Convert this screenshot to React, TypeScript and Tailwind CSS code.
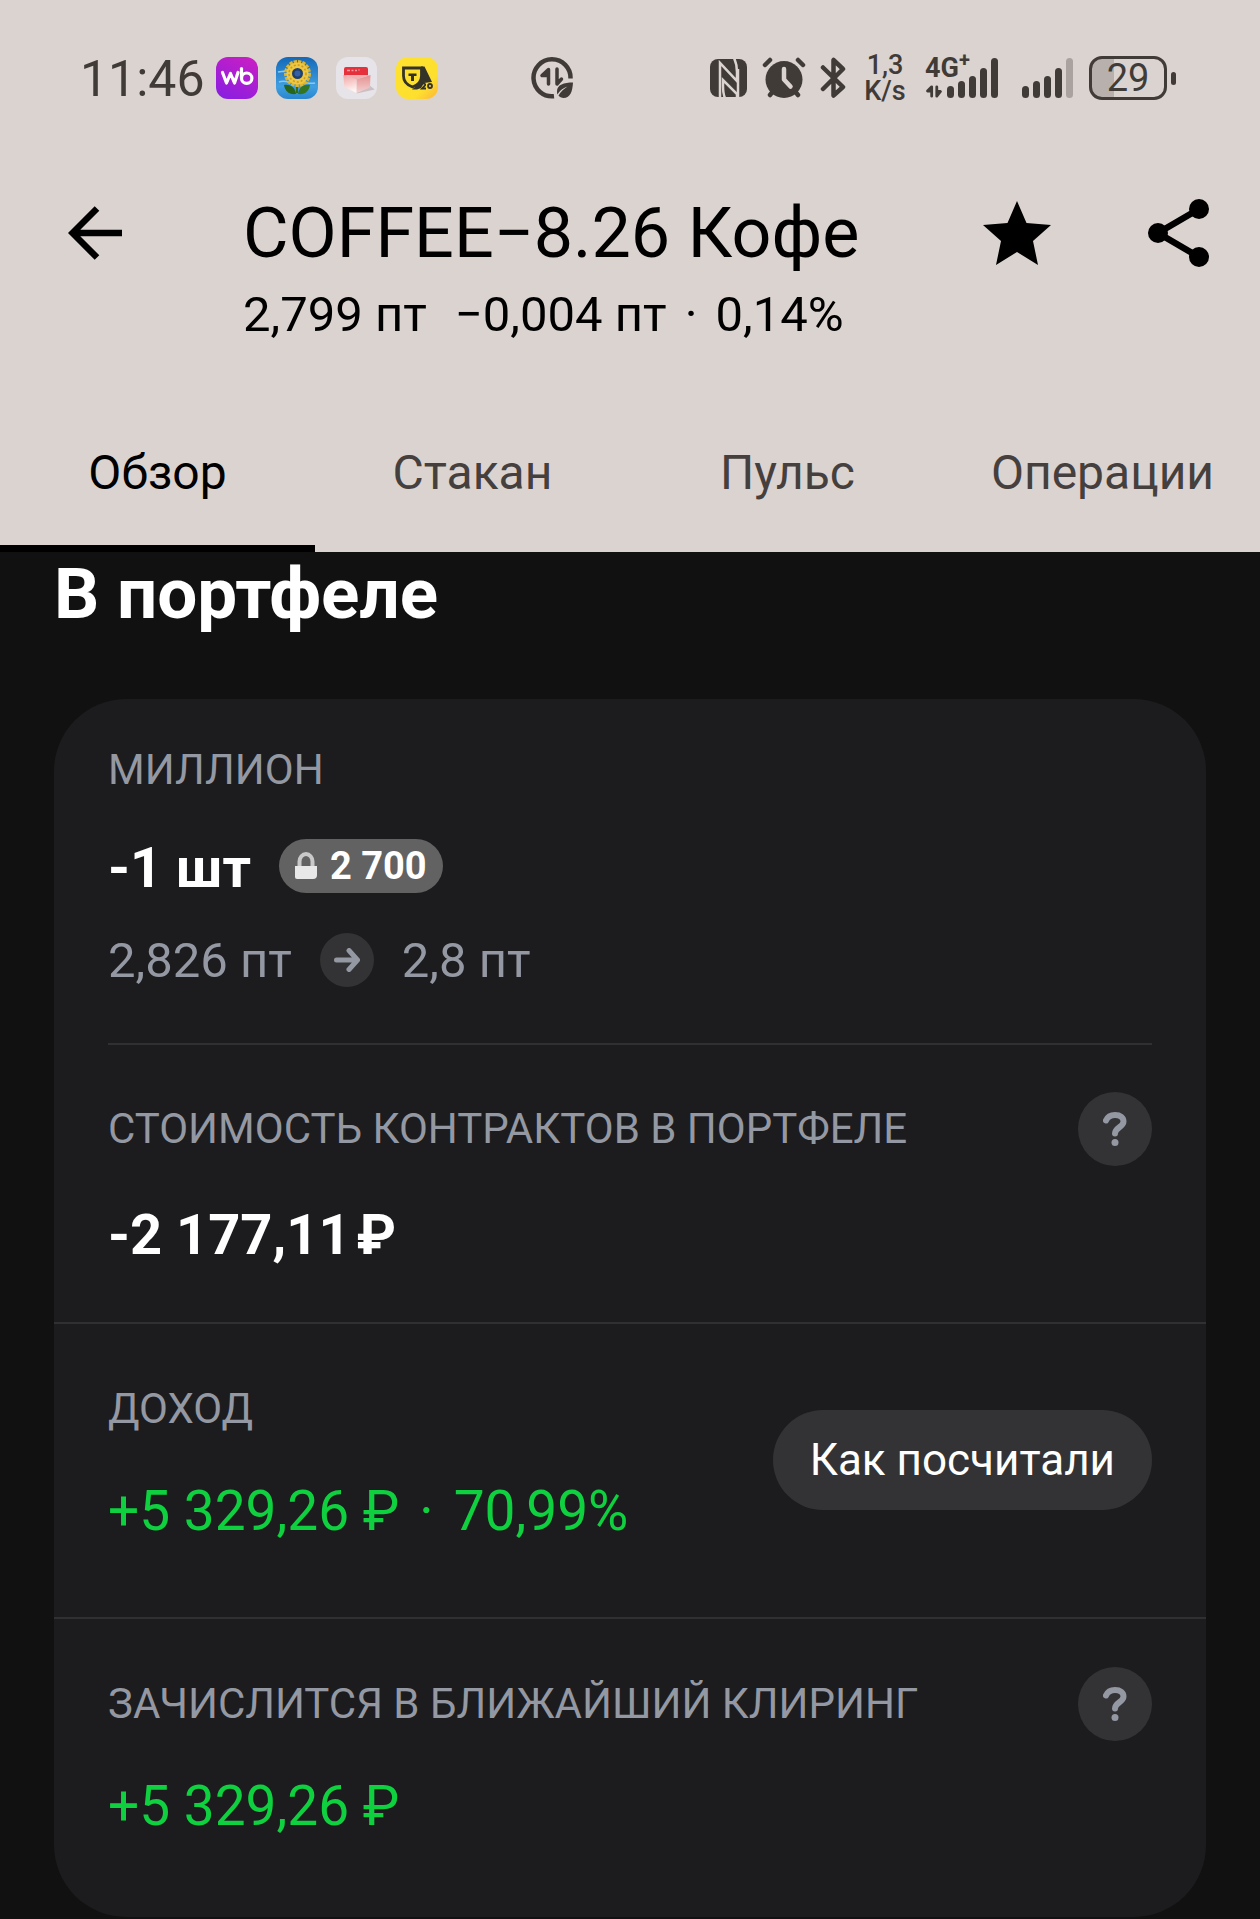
const tabs = ["Обзор", "Стакан", "Пульс", "Операции"]

const WbIcon = () => (
  <svg viewBox="0 0 42 42" className="w-[42px] h-[42px]">
    <defs>
      <linearGradient id="wb" x1="0.8" y1="0" x2="0.3" y2="1">
        <stop offset="0" stopColor="#c81fc4" />
        <stop offset="1" stopColor="#8c1ee0" />
      </linearGradient>
    </defs>
    <rect width="42" height="42" rx="12" fill="url(#wb)" />
    <g fill="none" stroke="#fff" strokeWidth="3.2" strokeLinecap="round" strokeLinejoin="round">
      <path d="M6.500 15.500 10.500 26l4-9.500 4 9.500 3.500-10.500" />
      <path d="M25.500 11.500V21" />
      <circle cx="30.700" cy="21.200" r="5.200" />
    </g>
  </svg>
)

const SunflowerIcon = () => (
  <svg viewBox="0 0 42 42" className="w-[42px] h-[42px]">
    <defs>
      <linearGradient id="sky" x1="0" y1="0" x2="0" y2="1">
        <stop offset="0" stopColor="#1468b8" />
        <stop offset="0.7" stopColor="#3f9fe0" />
        <stop offset="1" stopColor="#2a86cf" />
      </linearGradient>
    </defs>
    <rect width="42" height="42" rx="12" fill="url(#sky)" />
    <path d="M3 25c5-2 9 1 14-1M26 27c5-2 8 0 13-1M2 15c3-1 5 0 7-1" stroke="#8cc8ef" strokeWidth="1.5" fill="none" />
    <path d="M21 26v10" stroke="#2f6d1d" strokeWidth="2" />
    <path d="M20 37c-7 1-11-3-12-9 6-1 11 2 12 9Z" fill="#27651b" />
    <path d="M22 37c7 1 11-3 12-9-6-1-11 2-12 9Z" fill="#347523" />
    <circle cx="21.500" cy="16.500" r="11" fill="none" stroke="#e0b42c" strokeWidth="5" strokeDasharray="3 1" />
    <circle cx="21.500" cy="16.500" r="11" fill="#edc840" />
    <circle cx="21.500" cy="16.500" r="8.500" fill="none" stroke="#c9982a" strokeWidth="1.500" strokeDasharray="2 2" />
    <circle cx="21.500" cy="16.500" r="5.500" fill="#1f3f70" />
    <circle cx="21.500" cy="16.500" r="3" fill="#3461a5" />
  </svg>
)

const BoxIcon = () => (
  <svg viewBox="0 0 42 42" className="w-[42px] h-[42px]">
    <defs>
      <linearGradient id="boxLeft" x1="0" y1="0" x2="0.2" y2="1">
        <stop offset="0" stopColor="#efa3a3" />
        <stop offset="1" stopColor="#fff6f4" />
      </linearGradient>
      <linearGradient id="boxRight" x1="0" y1="0" x2="0" y2="1">
        <stop offset="0" stopColor="#e58f90" />
        <stop offset="1" stopColor="#f3d3d2" />
      </linearGradient>
    </defs>
    <rect width="41" height="42" rx="12" fill="#e7e4e9" />
    <path d="m20.700 36.500 18-4-5-4-13 3Z" fill="#c9bfc4" />
    <path d="M8 19V12q0-2 2-2h20q2 0 2 2v7Z" fill="#e4313c" />
    <path d="M11 13.500h3M15.500 13.500h2M19 13.500h2M22.500 13h1" stroke="#f59ba0" strokeWidth="1.500" />
    <path d="M7.300 18 20.700 22v14L8.300 30Z" fill="url(#boxLeft)" />
    <path d="M20.700 22 34.500 18 34 30.500 20.700 36Z" fill="url(#boxRight)" />
    <path d="M7.300 18h27.200l-13.800 4.500Z" fill="#f0b2b1" />
  </svg>
)

const BankIcon = () => (
  <svg viewBox="0 0 42 42" className="w-[42px] h-[42px]">
    <defs>
      <linearGradient id="bank" x1="0" y1="0" x2="1" y2="1">
        <stop offset="0" stopColor="#ffe22e" />
        <stop offset="0.7" stopColor="#fde02f" />
        <stop offset="1" stopColor="#fdb43a" />
      </linearGradient>
    </defs>
    <rect width="42" height="42" rx="12" fill="url(#bank)" />
    <path d="M25 9.500h3.500L36 25l-8 1-3 5-4 1.500h-5l6-5c3-4 4-9 3-18Z" fill="#333329" />
    <path d="M7.500 11h18v8c0 6-3.500 9-9 11-5.500-2-9-5-9-11Z" fill="#fde02f" stroke="#333329" strokeWidth="2.800" />
    <path d="M12.500 16.500h8v2.500h-2.500v5h-3v-5h-2.500Z" fill="#333329" />
    <path d="M26 27.500c1-2 4-1 3 1l-3 3h4" stroke="#333329" strokeWidth="1.800" fill="none" />
    <circle cx="34" cy="29" r="2" stroke="#333329" strokeWidth="1.800" fill="#fdc836" />
  </svg>
)

const DataSaverIcon = () => (
  <svg viewBox="0 0 42 42" className="w-[42px] h-[42px] text-[#403b37]">
    <path d="M39.500 21.500A18.500 18.500 0 1 0 23 39.200" fill="none" stroke="currentColor" strokeWidth="4.500" />
    <path d="M17.500 27V12.500L11 18.500h5M26 12v15l4.500-5" fill="none" stroke="currentColor" strokeWidth="3.500" strokeLinecap="round" strokeLinejoin="round" />
    <path d="M42 25.500c-9 0-16 2-16 9 0 1 0 2 .5 3 3-5 7-7 10-8-3 2-7 5-9 9 1 1.500 3 2.500 5 2.500 7 0 9-7 9.500-15.500Z" fill="currentColor" />
  </svg>
)

const NfcIcon = () => (
  <svg viewBox="0 0 38 38" className="w-[38px] h-[38px]">
    <rect width="37" height="38" rx="8" fill="#403b37" />
    <path d="M10 39V4l17 18V13c0-6-1-10-3-14" fill="none" stroke="#dbd3d0" strokeWidth="2.500" />
    <path d="M27 39V35L13 21v6c0 5 0 8 2 12" fill="none" stroke="#dbd3d0" strokeWidth="2.500" />
    <path d="M28 39V10" fill="none" stroke="#dbd3d0" strokeWidth="2.500" />
  </svg>
)

const AlarmIcon = () => (
  <svg viewBox="0 0 44 42" className="w-[44px] h-[42px] text-[#403b37]">
    <circle cx="22" cy="22.500" r="18.500" fill="currentColor" />
    <path d="m3 8 5-5M41 8l-5-5M8 38l4-5M36 38l-4-5" stroke="currentColor" strokeWidth="4.500" strokeLinecap="round" />
    <path d="M22 12v10.500l6.500 7" fill="none" stroke="#dbd3d0" strokeWidth="4.500" strokeLinecap="round" strokeLinejoin="round" />
  </svg>
)

const BluetoothIcon = () => (
  <svg viewBox="0 0 26 42" className="w-[26px] h-[42px] text-[#403b37]">
    <path d="M3 10.500 23 30l-9.500 8.500V25M3 32 23 12l-9.500-9v14" fill="none" stroke="currentColor" strokeWidth="4.500" strokeLinecap="round" strokeLinejoin="round" />
  </svg>
)

const DataArrowsIcon = () => (
  <svg viewBox="0 0 18 14" className="w-[18px] h-[13px] text-[#403b37]">
    <path d="M6.500 12V2L2 6.500h4M12 2v10l4-5h-4" fill="none" stroke="currentColor" strokeWidth="3" strokeLinecap="round" strokeLinejoin="round" />
  </svg>
)

const LockIcon = () => (
  <svg viewBox="0 0 22 28" className="w-[22px] h-[28px]">
    <path d="M4.500 14V9.500a6.500 7.500 0 0 1 13 0V14" fill="none" stroke="#c9c9c9" strokeWidth="4" />
    <path d="M0 14h22v9q0 4-4 4H2q-2 0-2-2Z" fill="#e8e8e8" />
  </svg>
)

const BackIcon = () => (
  <svg viewBox="0 0 54 54" className="w-[54px] h-[54px]">
    <path d="M29 2.500 4.500 27 29 51.500M4.500 27H54" fill="none" stroke="#000" strokeWidth="6.500" />
  </svg>
)

const ShareIcon = () => (
  <svg viewBox="0 0 61 68" className="w-[61px] h-[68px]">
    <path d="M51 10 10 34l41 24" fill="none" stroke="#000" strokeWidth="6.500" />
    <circle cx="51" cy="10" r="10" />
    <circle cx="10" cy="34" r="10" />
    <circle cx="51" cy="58" r="10" />
  </svg>
)

const StarIcon = () => (
  <svg viewBox="0 0 68 64" className="w-[68px] h-[64px]">
    <path d="m34 0 9.500 22L68 24 50 40l5 24-21-13-21 13 5-24L0 24l24.500-2Z" />
  </svg>
)

const HelpButton = ({ label }: { label: string }) => (
  <button
    aria-label={label}
    className="flex h-[74px] w-[74px] shrink-0 items-center justify-center rounded-full bg-[#333335] text-[#9498a2]"
  >
    <svg viewBox="0 0 24 34" className="w-[24px] h-[34px]">
      <path d="M3 8.500C4.500 5 7.500 3 12 3c5.500 0 8.500 2.500 8.500 6.500 0 5.500-8.500 6-8.500 12" fill="none" stroke="currentColor" strokeWidth="6" strokeLinecap="round" />
      <circle cx="12" cy="30.500" r="3.500" fill="currentColor" />
    </svg>
  </button>
)

const StatusBar = () => (
  <div className="flex h-[156px] items-center justify-between pl-20 pr-[84px] text-[#403b37]">
    <div className="flex items-center">
      <time className="w-[136px] pt-[2px] text-[50px] leading-[56px]">11:46</time>
      <div className="flex items-center gap-[18px]">
        <WbIcon />
        <SunflowerIcon />
        <BoxIcon />
        <BankIcon />
      </div>
      <div className="ml-[93px]">
        <DataSaverIcon />
      </div>
    </div>
    <div className="flex items-center">
      <NfcIcon />
      <div className="ml-[14px]">
        <AlarmIcon />
      </div>
      <div className="ml-[14px]">
        <BluetoothIcon />
      </div>
      <div className="ml-[18px] w-[42px] text-center text-[27px] font-medium leading-[26px]">
        <div>1,3</div>
        <div>K/s</div>
      </div>
      <div className="ml-[19px] flex h-10 items-end gap-[4px]">
        <div className="relative flex h-full w-[18px] flex-col justify-end">
          <span className="absolute left-0 top-[-4px] text-[27px] font-bold leading-[28px]">
            4G<sup className="absolute left-full top-[-4px] text-[20px] leading-[20px]">+</sup>
          </span>
          <DataArrowsIcon />
        </div>
        <div className="h-[12px] w-[7px] rounded-full bg-[#403b37]" />
        <div className="h-[17px] w-[7px] rounded-full bg-[#403b37]" />
        <div className="h-[22px] w-[7px] rounded-full bg-[#403b37]" />
        <div className="h-[30px] w-[7px] rounded-full bg-[#403b37]" />
        <div className="h-[40px] w-[7px] rounded-full bg-[#403b37]" />
      </div>
      <div className="ml-[24px] flex h-10 items-end gap-[4px]">
        <div className="h-[12px] w-[7px] rounded-full bg-[#403b37]" />
        <div className="h-[17px] w-[7px] rounded-full bg-[#403b37]" />
        <div className="h-[22px] w-[7px] rounded-full bg-[#403b37]" />
        <div className="h-[30px] w-[7px] rounded-full bg-[#403b37]" />
        <div className="h-[40px] w-[7px] rounded-full bg-[#a9a29f]" />
      </div>
      <div className="ml-[16px] flex h-[44px] w-[78px] items-center justify-center rounded-[13px] border-3 border-[#403b37] bg-linear-to-r from-[#b7b0ad] from-30% to-transparent to-30% text-[38px] leading-[40px]">
        29
      </div>
      <div className="ml-[4px] h-[13px] w-[5px] rounded-full bg-[#403b37]" />
    </div>
  </div>
)

const App = () => {
  return (
    <div className="min-h-screen bg-[#111111] font-[Roboto,sans-serif] text-white">
      <header className="bg-[#dbd3d0] text-black">
        <StatusBar />

        <div className="flex items-start pl-[68px] pr-[51px] pt-[37px]">
          <button aria-label="Назад" className="flex h-20 w-[175px] items-center">
            <BackIcon />
          </button>
          <div className="flex-1 whitespace-nowrap">
            <h1 className="text-[70px] leading-[80px]">COFFEE−8.26 Кофе</h1>
            <p className="mt-[14px] flex text-[49px] leading-[56px]">
              <span>2,799 пт</span>
              <span className="ml-7">−0,004 пт</span>
              <span className="mx-[18px]">·</span>
              <span>0,14%</span>
            </p>
          </div>
          <button aria-label="В избранное" className="flex h-20 items-center">
            <StarIcon />
          </button>
          <button aria-label="Поделиться" className="ml-[97px] flex h-20 items-center">
            <ShareIcon />
          </button>
        </div>

        <nav className="mt-[58px] grid grid-cols-4 text-[48px] leading-[56px]">
          {tabs.map((tab, index) => (
            <button
              key={tab}
              className={
                index === 0
                  ? "border-b-[7px] border-black pb-[44px] pt-[44px] text-black"
                  : "border-b-[7px] border-transparent pb-[44px] pt-[44px] text-[#45403d]"
              }
            >
              {tab}
            </button>
          ))}
        </nav>
      </header>

      <main className="px-[54px] pt-[2px]">
        <h2 className="text-[71px] font-bold leading-[80px]">В портфеле</h2>

        <div className="mt-[65px] rounded-[72px] bg-[#1c1c1e]">
          {/* Position */}
          <section className="mx-[54px] border-b-2 border-[#303032] pb-[54px] pt-[47px]">
            <h3 className="text-[42px] leading-[48px] text-[#9498a2]">МИЛЛИОН</h3>
            <div className="mt-[42px] flex items-start gap-7">
              <span className="text-[56px] font-bold leading-[64px]">-1 шт</span>
              <span className="mt-[3px] flex h-[54px] items-center gap-[13px] rounded-full bg-[#626262] px-4 text-[38px] font-bold leading-[44px]">
                <LockIcon />2 700
              </span>
            </div>
            <div className="mt-[33px] flex items-start gap-7 text-[49px] leading-[56px] text-[#9498a2]">
              <span>2,826 пт</span>
              <span className="flex h-[54px] w-[54px] items-center justify-center rounded-full bg-[#333335]">
                <svg viewBox="0 0 26 24" className="w-[26px] h-[24px]">
                  <path d="M2.500 12H23M15 2.500 23.500 12 15 21.500" fill="none" stroke="currentColor" strokeWidth="5" strokeLinecap="round" strokeLinejoin="round" />
                </svg>
              </span>
              <span>2,8 пт</span>
            </div>
          </section>

          {/* Contracts value */}
          <section className="border-b-2 border-[#303032] px-[54px] pb-[55px] pt-[47px]">
            <div className="flex items-center justify-between">
              <h3 className="text-[42px] leading-[48px] text-[#9498a2]">СТОИМОСТЬ КОНТРАКТОВ В ПОРТФЕЛЕ</h3>
              <HelpButton label="О стоимости контрактов" />
            </div>
            <p className="mt-[37px] flex gap-1.5 text-[56px] font-bold leading-[64px]">
              <span>-2 177,11</span>
              <span>₽</span>
            </p>
          </section>

          {/* Income */}
          <section className="flex items-start justify-between border-b-2 border-[#303032] px-[54px] pb-[74px] pt-[61px]">
            <div>
              <h3 className="text-[42px] leading-[48px] text-[#9498a2]">ДОХОД</h3>
              <p className="mt-[46px] flex gap-5 text-[55px] leading-[64px] text-[#0fd03f]">
                <span>+5 329,26 ₽</span>
                <span>·</span>
                <span>70,99%</span>
              </p>
            </div>
            <button className="mt-[25px] rounded-full bg-[#333335] px-[37px] py-[23px] text-[44px] leading-[54px]">
              Как посчитали
            </button>
          </section>

          {/* Clearing */}
          <section className="px-[54px] pb-[79px] pt-[48px]">
            <div className="flex items-center justify-between">
              <h3 className="text-[42px] leading-[48px] text-[#9498a2]">ЗАЧИСЛИТСЯ В БЛИЖАЙШИЙ КЛИРИНГ</h3>
              <HelpButton label="О зачислении в клиринг" />
            </div>
            <p className="mt-[33px] text-[55px] leading-[64px] text-[#0fd03f]">+5 329,26 ₽</p>
          </section>
        </div>
      </main>
    </div>
  )
}

export default App
